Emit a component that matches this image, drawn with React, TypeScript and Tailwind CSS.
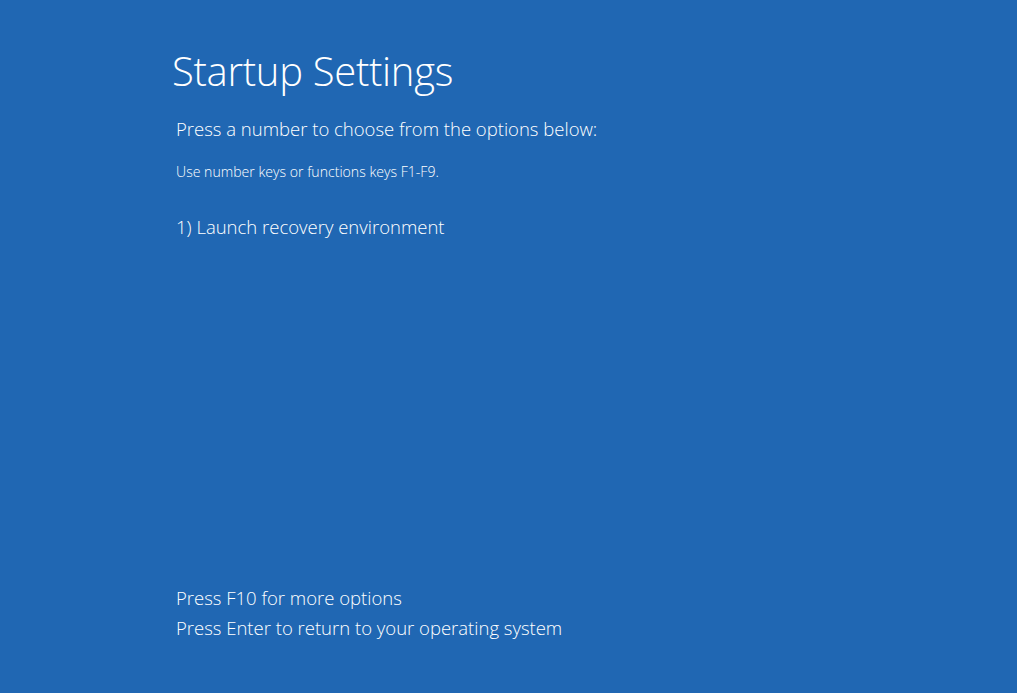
import React from "react";

export default function App() {
  return (
    <div
      className="w-full h-[693px] bg-[#2067b3] text-white flex flex-col pl-[174px]"
      style={{ fontFamily: '"Open Sans", "Noto Sans", sans-serif' }}
    >
      <h1 className="mt-[43px] -ml-[2px] text-[40px] leading-[56px] font-light tracking-[-0.3px]">Startup Settings</h1>
      <p className="mt-[17px] ml-[2px] text-[18.5px] leading-[26px] font-light">Press a number to choose from the options below:</p>
      <p className="mt-[21px] ml-[2px] text-[14.1px] leading-[18px] font-light">Use number keys or functions keys F1-F9.</p>
      <p className="mt-[33px] ml-[2px] text-[18.5px] leading-[26px] font-light">1) Launch recovery environment</p>
      <div className="mt-auto mb-[50px] ml-[2px] flex flex-col">
        <p className="text-[18.5px] leading-[30px] font-light">Press F10 for more options</p>
        <p className="text-[18.5px] leading-[30px] font-light">Press Enter to return to your operating system</p>
      </div>
    </div>
  );
}
